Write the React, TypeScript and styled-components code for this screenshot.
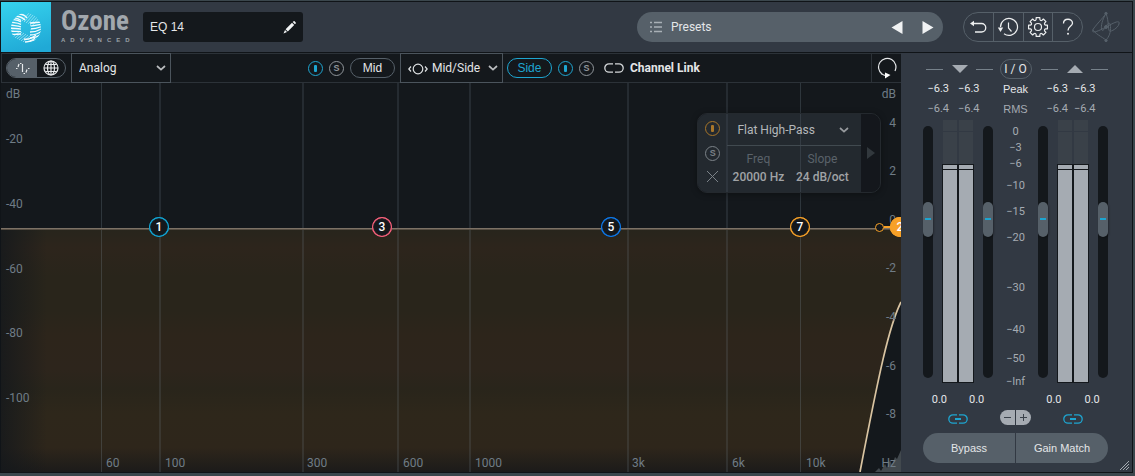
import React from "react";
import styled, { createGlobalStyle, css } from "styled-components";

const c = {
  frame: "#3b474d",
  panel: "#323943",
  dark: "#14181c",
  line: "#2c3238",
  lineLight: "#4b545c",
  pill: "#566069",
  text: "#e4e6e8",
  muted: "#a5abb2",
  axis: "#6f7c86",
  cyan: "#1ea5d0",
  orange: "#f7a128",
};

const roboto = `Roboto, "Liberation Sans", sans-serif`;
const arial = `"Liberation Sans", Roboto, sans-serif`;

const GlobalStyle = createGlobalStyle`
  *, *::before, *::after { box-sizing: border-box; }
  body { margin: 0; background: ${c.frame}; }
  button, select, input { font: inherit; color: inherit; margin: 0; padding: 0; border: 0; background: none; }
  button { cursor: pointer; display: inline-flex; align-items: center; justify-content: center; }
  svg { display: block; }
`;

const Window = styled.div`
  display: flex;
  flex-direction: column;
  min-height: 100vh;
  border: solid ${c.frame};
  border-width: 1px 2px 3px 0;
  background: #101418;
  padding: 1px 1px 1px 1px;
  color: ${c.text};
  font: 12px/16px ${roboto};
`;

/* ---------- header ---------- */

const Header = styled.header`
  display: flex;
  align-items: center;
  height: 50px;
  padding-right: 11px;
  background: ${c.panel};
`;

const Logo = styled.div`
  width: 50px;
  height: 50px;
  background: linear-gradient(165deg, #36d3ee, #20a9d6 90%);
`;

const Brand = styled.div`
  display: flex;
  flex-direction: column;
  width: 82px;
  margin-left: 10px;
  padding-bottom: 4px;
`;

const BrandName = styled.h1`
  margin: 0;
  font: bold 27px/29px "Liberation Sans Narrow", "Roboto Condensed", ${roboto};
  color: #a2a8ae;
`;

const BrandTier = styled.span`
  font: bold 6px/8px ${arial};
  letter-spacing: 5px;
  color: #9aa1a7;
`;

const NameField = styled.label`
  display: flex;
  align-items: center;
  width: 160px;
  height: 30px;
  padding: 0 7px;
  border-radius: 3px;
  background: ${c.dark};
  font: 12px/16px ${arial};
  input { flex: 1; min-width: 0; outline: 0; }
`;

const Spacer = styled.div<{ $grow?: number }>`
  flex: ${(p) => p.$grow ?? 1};
`;

const PresetBar = styled.div`
  display: flex;
  align-items: center;
  width: 306px;
  height: 30px;
  padding-left: 12px;
  border-radius: 15px;
  background: ${c.pill};
`;

const PresetButton = styled.button`
  flex: 1;
  justify-content: flex-start;
  gap: 8px;
  height: 30px;
`;

const ArrowButton = styled.button`
  width: 31px;
  height: 30px;
  svg { fill: #f0f2f3; }
`;

const Tools = styled.div`
  display: flex;
  width: 120px;
  height: 30px;
  margin: 0 8px 0 20px;
  border: 1px solid ${c.pill};
  border-radius: 15px;
`;

const ToolButton = styled.button`
  flex: 1;
  & + & { border-left: 1px solid ${c.pill}; }
  svg { fill: none; stroke: #eceeef; }
`;

/* ---------- layout ---------- */

const Body = styled.main`
  display: flex;
  flex: 1;
  margin-top: 1px;
`;

const Editor = styled.section`
  display: flex;
  flex: 1;
  flex-direction: column;
  min-width: 0;
  background: ${c.dark};
`;

/* ---------- toolbar ---------- */

const Toolbar = styled.div`
  display: flex;
  align-items: stretch;
  height: 30px;
  border: solid ${c.line};
  border-width: 1px 0 1px 1px;
`;

const Cluster = styled.div`
  display: flex;
  align-items: center;
  gap: 6px;
  padding: 0 5px 0 4px;
`;

const ViewToggle = styled.div`
  display: flex;
  width: 60px;
  height: 20px;
  border: 1px solid ${c.pill};
  border-radius: 10px;
  overflow: hidden;
`;

const ViewButton = styled.button<{ $on?: boolean }>`
  width: ${(p) => (p.$on ? 30 : 28)}px;
  background: ${(p) => (p.$on ? c.pill : "transparent")};
  svg { fill: none; stroke: #e8eaec; }
`;

const Dropdown = styled.div<{ $width: number; $boxed?: boolean }>`
  position: relative;
  display: flex;
  align-items: center;
  gap: 4px;
  width: ${(p) => p.$width}px;
  padding: 0 4px 0 7px;
  ${(p) => p.$boxed && css`
    margin: -1px 0;
    border: 1px solid ${c.lineLight};
  `}
  select {
    flex: 1;
    min-width: 0;
    height: 28px;
    appearance: none;
    outline: 0;
  }
  svg { fill: none; pointer-events: none; }
`;

const Pill = styled.button<{ $active?: boolean }>`
  width: 45px;
  height: 20px;
  border: 1px solid ${(p) => (p.$active ? c.cyan : c.pill)};
  border-radius: 10px;
  color: ${(p) => (p.$active ? c.cyan : c.text)};
  font-family: ${arial};
`;

const RoundButton = styled.button<{ $color: string }>`
  width: 15px;
  height: 15px;
  border: 1px solid ${(p) => p.$color};
  border-radius: 50%;
  color: ${(p) => p.$color};
  font: bold 9px/13px ${arial};
`;

const PowerBar = styled.i`
  width: 3px;
  height: 7px;
  border-radius: 1px;
  background: currentColor;
`;

const LinkToggle = styled.button`
  gap: 6px;
  margin-left: 4px;
  font: bold 12px/16px ${roboto};
`;

const LoopButton = styled.button`
  width: 30px;
  border-left: 1px solid ${c.line};
`;

/* ---------- spectrum ---------- */

const Plot = styled.div`
  position: relative;
  flex: 1;
  min-height: 388px;
  overflow: hidden;
`;

const PlotDrawing = styled.svg`
  position: absolute;
  inset: 0;
  width: 100%;
  height: 100%;
`;

const AxisLabel = styled.span<{ $x?: number; $y?: number; $side?: "left" | "right" }>`
  position: absolute;
  color: ${c.axis};
  ${(p) => (p.$y !== undefined ? `top: ${(p.$y / 389) * 100}%; margin-top: -8px;` : "bottom: 1px;")}
  ${(p) =>
    p.$side === "left" ? "left: 5px;" : p.$side === "right" ? "right: 5px;" : `left: ${((p.$x ?? 0) / 900) * 100}%;`}
`;

const Node = styled.button<{ $x: number; $color: string; $filled?: boolean }>`
  position: absolute;
  left: ${(p) => (p.$x / 900) * 100}%;
  top: 37%;
  width: 20px;
  height: 20px;
  margin: -10px 0 0 -10px;
  border-radius: 50%;
  border: 0;
  box-shadow: inset 0 0 0 1px ${(p) => p.$color}, inset 0 0 1px 1px ${(p) => p.$color};
  background: ${(p) => (p.$filled ? p.$color : c.dark)};
  color: #fff;
  font: 500 12px/20px ${roboto};
`;

const SlopeHandle = styled.div`
  position: absolute;
  right: 10px;
  top: 37%;
  display: flex;
  align-items: center;
  width: 16px;
  height: 9px;
  margin-top: -4px;
  &::before {
    content: "";
    width: 9px;
    height: 9px;
    border: 1px solid ${c.orange};
    border-radius: 50%;
    background: ${c.dark};
  }
  &::after { content: ""; flex: 1; height: 2px; background: ${c.orange}; }
`;

const BandPanel = styled.div`
  position: absolute;
  top: 30px;
  right: 20px;
  display: flex;
  width: 184px;
  height: 80px;
  border: 1px solid #24292e;
  border-radius: 10px;
  overflow: hidden;
  box-shadow: 0 1px 6px rgba(0, 0, 0, 0.35);
  color: #b4b7ba;
`;

const BandSwitches = styled.div`
  display: flex;
  flex-direction: column;
  align-items: center;
  justify-content: space-between;
  width: 30px;
  padding: 7px 0 10px;
  background: rgba(64, 72, 82, 0.36);
`;

const BandBody = styled.div`
  display: flex;
  flex: 1;
  flex-direction: column;
  background: rgba(64, 72, 82, 0.36);
`;

const BandType = styled.div`
  display: flex;
  height: 32px;
  padding: 0 8px 0 3px;
  border-bottom: 1px solid #414a50;
`;

const Params = styled.dl`
  display: grid;
  grid-template-columns: 62px 66px;
  margin: 4px 0 0;
  text-align: center;
  line-height: 18px;
  white-space: nowrap;
  dt { color: #5a626a; }
  dd { margin: 0; color: #a0a3a6; font-weight: 500; }
`;

const ExpandButton = styled.button`
  width: 19px;
  background: rgba(20, 24, 28, 0.6);
  svg { fill: #32383d; }
`;

/* ---------- meters ---------- */

const Meters = styled.aside`
  display: grid;
  grid-template-columns: 70px 45px 70px;
  grid-template-rows: 20px 20px 20px minmax(269px, 1fr) 20px 17px;
  align-content: start;
  width: 231px;
  padding: 6px 24px 9px 22px;
  background: ${c.panel};
  justify-items: center;
`;

const GroupHead = styled.div`
  display: flex;
  align-items: center;
  justify-content: space-between;
  justify-self: end;
  width: 67px;
  color: ${c.pill};
  &::before, &::after { content: ""; width: 17px; height: 1px; background: #76818a; }
  svg { fill: ${c.muted}; }
`;

const IoButton = styled.button`
  width: 32px;
  height: 20px;
  border: 1px solid ${c.pill};
  border-radius: 10px;
`;

const Readings = styled.div<{ $gap: number; $dim?: boolean; $shift?: number }>`
  display: flex;
  align-items: center;
  justify-content: center;
  gap: ${(p) => p.$gap}px;
  margin-right: ${(p) => p.$shift ?? 0}px;
  color: ${(p) => (p.$dim ? c.muted : c.text)};
  font-size: 11px;
  line-height: 16px;
`;

const RowLabel = styled.span<{ $dim?: boolean }>`
  align-self: center;
  font: 11px/16px ${arial};
  color: ${(p) => (p.$dim ? c.muted : c.text)};
`;

const Channel = styled.div`
  display: flex;
  justify-content: space-between;
  justify-self: stretch;
  padding: 1px 0 7px;
`;

const Fader = styled.input`
  width: 10px;
  margin: 6px 0 5px;
  appearance: none;
  writing-mode: vertical-lr;
  direction: rtl;
  border-radius: 5px;
  background: ${c.dark};
  &::-webkit-slider-thumb {
    appearance: none;
    width: 10px;
    height: 35px;
    border-radius: 5px;
    background: linear-gradient(${c.cyan}, ${c.cyan}) center / 6px 2px no-repeat, ${c.pill};
    box-shadow: 1px 1px 2px rgba(0, 0, 0, 0.3);
  }
`;

const LevelPair = styled.div`
  display: flex;
  width: 32px;
`;

const Level = styled.div`
  display: flex;
  flex: 1;
  flex-direction: column;
`;

const Headroom = styled.div<{ $share: number; $ceiling?: boolean }>`
  flex: ${(p) => p.$share} 0 0;
  margin: 0 1px;
  background: #3a4149;
  border-bottom: ${(p) => (p.$ceiling ? `1px solid ${c.panel}` : "0")};
`;

const Fill = styled.div<{ $share: number }>`
  flex: ${(p) => p.$share} 0 0;
  border: 1px solid ${c.dark};
  background: linear-gradient(${c.muted} 4px, ${c.dark} 4px, ${c.dark} 5px, ${c.muted} 5px);
`;

const Scale = styled.div`
  display: grid;
  grid-template-rows: 16fr 16fr 22fr 26fr 26fr 50fr 42fr 29fr 23fr 12px;
  padding: 7px 0 2px;
  text-align: center;
  font: 11px/12px ${roboto};
  color: ${c.muted};
`;

const MeterLink = styled.button`
  width: 22px;
  height: 17px;
`;

const ScaleZoom = styled.div`
  display: flex;
  gap: 1px;
  height: 15px;
  border-radius: 8px;
  overflow: hidden;
  button { width: 15px; background: ${c.muted}; }
  svg { fill: none; stroke: #3a424b; }
`;

const Footer = styled.div`
  display: flex;
  grid-column: 1 / -1;
  justify-self: stretch;
  gap: 1px;
  height: 30px;
  margin-top: 6px;
  border-radius: 15px;
  overflow: hidden;
  font: 11px/16px ${arial};
  button { flex: 1; background: ${c.pill}; }
`;

const Corner = styled.svg`
  position: absolute;
  right: 6px;
  bottom: 6px;
`;

/* ---------- small drawings ---------- */

const Chevron = () => (
  <svg width="10" height="6" viewBox="0 0 10 6" stroke="currentColor" strokeWidth="1.7">
    <path d="M1 1l4 3.6L9 1" opacity=".8" />
  </svg>
);

const Power = ({ color = c.cyan }: { color?: string }) => (
  <RoundButton $color={color} aria-label="Enable"><PowerBar /></RoundButton>
);

const Solo = ({ color = "#8f959a" }: { color?: string }) => (
  <RoundButton $color={color} aria-label="Solo">S</RoundButton>
);

const ChainIcon = ({ color, bar }: { color: string; bar?: boolean }) => (
  <svg width="20" height="10" viewBox="0 0 20 10" fill="none" stroke={color} strokeWidth="1.3">
    <path d="M9 .8H5A4.2 4.2 0 0 0 5 9.2h4M11 .8h4a4.2 4.2 0 0 1 0 8.4h-4" />
    {bar && <path d="M7 5h6" strokeWidth="2" />}
  </svg>
);

const LogoArt = () => (
  <svg width="50" height="50" viewBox="0 0 50 50">
    <defs>
      <mask id="ring">
        <circle cx="25" cy="26" r="15" fill="#fff" />
        <circle cx="25" cy="26" r="5" fill="#000" />
      </mask>
    </defs>
    <g mask="url(#ring)" fill="none" stroke="#f2fbfe" strokeWidth="1.3">
      {[16, 18, 21, 24, 27, 30, 33].map((y) => (
        <path key={y} d={`M9 ${y - 1}c4 1 7 0 11 ${(33 - y) / 5}`} />
      ))}
      {[19, 22, 25, 28, 31, 34, 37].map((y) => (
        <path key={y} d={`M29 ${y + 2}c4 0 8-1 12 ${-(y - 15) / 4}`} />
      ))}
      <path d="M13 14c5 0 8 1 11 4M17 12c4 0 7 1 9 4M23 37c4 1 7 0 12-4M24 40c4 0 7-1 10-4" />
      {[0, 2, 4, 6, 8, 10].map((d) => (
        <path key={d} d={`M${21 + d} ${19 + d / 2}l8-9M${12 + d} ${35 + d / 2}l7-6`} strokeWidth=".7" opacity=".7" />
      ))}
    </g>
  </svg>
);

const gear = Array.from({ length: 8 }, (_, i) => {
  const pt = (deg: number, r: number) => {
    const a = ((i * 45 + deg) * Math.PI) / 180;
    return `${(11 + r * Math.cos(a)).toFixed(2)} ${(11 + r * Math.sin(a)).toFixed(2)}`;
  };
  return `${i ? "L" : "M"}${pt(-11, 9.6)}L${pt(11, 9.6)}L${pt(14, 7.8)}Q${pt(22.5, 6.4)} ${pt(31, 7.8)}`;
}).join("") + "Z";

/* ---------- data ---------- */

const gridLines = [
  { x: 100, w: 1 }, { x: 158, w: 2 }, { x: 301, w: 2 }, { x: 396, w: 2 },
  { x: 468, w: 2 }, { x: 626, w: 2 }, { x: 725, w: 2 }, { x: 799, w: 1 },
];
const freqLabels: [string, number][] = [
  ["60", 105], ["100", 164], ["300", 306], ["600", 402], ["1000", 474], ["3k", 631], ["6k", 731], ["10k", 805],
];
const leftLabels: [string, number][] = [["dB", 11], ["-20", 56], ["-40", 121], ["-60", 186], ["-80", 250], ["-100", 315]];
const rightLabels: [string, number][] = [
  ["dB", 11], ["4", 40], ["2", 88], ["0", 137], ["-2", 185], ["-4", 234], ["-6", 283], ["-8", 331],
];
const nodes = [
  { n: 1, x: 158, color: "#12a5d4" },
  { n: 3, x: 381, color: "#f4607a" },
  { n: 5, x: 610, color: "#0f78e8" },
  { n: 7, x: 799, color: c.orange },
];
const scale = ["0", "−3", "−6", "−10", "−15", "−20", "−30", "−40", "−50", "−Inf"];

const ChannelMeter = ({ name }: { name: string }) => (
  <Channel>
    <Fader type="range" min={0} max={1000} defaultValue={652} aria-label={`${name} left gain`} />
    <LevelPair>
      {[0, 1].map((i) => (
        <Level key={i}>
          <Headroom $share={11} $ceiling />
          <Headroom $share={32} />
          <Fill $share={219} />
        </Level>
      ))}
    </LevelPair>
    <Fader type="range" min={0} max={1000} defaultValue={652} aria-label={`${name} right gain`} />
  </Channel>
);

export default function App() {
  return (
    <>
      <GlobalStyle />
      <Window>
        <Header>
          <Logo><LogoArt /></Logo>
          <Brand>
            <BrandName>Ozone</BrandName>
            <BrandTier>ADVANCED</BrandTier>
          </Brand>
          <NameField>
            <input defaultValue="EQ 14" aria-label="Module name" />
            <svg width="13" height="13" viewBox="0 0 13 13" fill="#f2f4f5">
              <path d="M2.6 8.2L9 1.8l2.2 2.2-6.4 6.4zM9.7 1.1L10.6.3q.5-.4 1 0l1.100 1.100q.4.5 0 1l-.8.9zM2 9l2 2-3.500 1.500z" />
            </svg>
          </NameField>
          <Spacer />
          <PresetBar>
            <PresetButton>
              <svg width="14" height="12" viewBox="0 0 14 12" stroke="#a9b0b6" strokeWidth="1.5">
                <path d="M1 1.500h2M1 6h2M1 10.500h2M5 1.500h8M5 6h8M5 10.500h8" />
              </svg>
              Presets
            </PresetButton>
            <ArrowButton aria-label="Previous preset">
              <svg width="12" height="13" viewBox="0 0 12 13"><path d="M11.500 0v13L.5 6.500z" /></svg>
            </ArrowButton>
            <ArrowButton aria-label="Next preset">
              <svg width="12" height="13" viewBox="0 0 12 13"><path d="M.5 0v13l11-6.500z" /></svg>
            </ArrowButton>
          </PresetBar>
          <Tools>
            <ToolButton aria-label="Undo">
              <svg width="18" height="14" viewBox="0 0 18 14" strokeWidth="1.3">
                <path d="M3 3.500h9.500a4.200 4.200 0 0 1 0 8.500H6" />
                <path d="M1 3.500L5 .8v5.400z" fill="#eceeef" stroke="none" />
              </svg>
            </ToolButton>
            <ToolButton aria-label="History">
              <svg width="22" height="20" viewBox="0 0 22 20" strokeWidth="1.2">
                <path d="M3.500 10a8.500 8.500 0 1 1 3.500 6.800M11.500 5.500V11l3 3.500" />
                <path d="M.8 10.500h5.400L3.500 15z" fill="#eceeef" stroke="none" />
              </svg>
            </ToolButton>
            <ToolButton aria-label="Settings">
              <svg width="22" height="22" viewBox="0 0 22 22" strokeWidth="1.2">
                <path d={gear} strokeLinejoin="round" />
                <circle cx="11" cy="11" r="3.500" />
              </svg>
            </ToolButton>
            <ToolButton aria-label="Help">
              <svg width="12" height="18" viewBox="0 0 12 18" strokeWidth="1.3">
                <path d="M1.500 5.500C1.500-.2 10.500 0 10.500 5.200 10.200 8.300 6 8.500 6 12.500" />
                <circle cx="6" cy="15.800" r="1" fill="#eceeef" stroke="none" />
              </svg>
            </ToolButton>
          </Tools>
          <svg width="30" height="32" viewBox="0 0 30 32" fill="none" stroke="#56606a" strokeWidth="1">
            <path d="M15 2.500C12 7 4 15 2 18.500c-2 4 3 3 13-2.500s14-7 13-3-8 8-9.500 7S18 10 15 2.500" />
            <path d="M15 29C11 26 3 22 2 18.500M15 29c3-3 5-8 4.500-13.500S17 12 15 15.500 11 21 10.500 18 11 9 15 2.500" />
            <circle cx="15" cy="2.500" r="1.200" fill="#56606a" />
            <circle cx="15" cy="29.500" r="1.200" fill="#56606a" />
            <circle cx="15" cy="16" r="1.500" fill="#56606a" />
          </svg>
        </Header>

        <Body>
          <Editor>
            <Toolbar>
              <Cluster>
                <ViewToggle>
                  <ViewButton $on aria-label="Curve view">
                    <svg width="15" height="13" viewBox="0 0 15 13" strokeWidth="1.2">
                      <path d="M1 6.500h1.500M3 5l1-3M5 1.500h1.500M7.500 2v8M8.500 11.500H10M11 10.500l1-3M13 6.500h1.500" />
                    </svg>
                  </ViewButton>
                  <ViewButton aria-label="Stereo view">
                    <svg width="16" height="16" viewBox="0 0 16 16" strokeWidth="1.200">
                      <circle cx="8" cy="8" r="7" />
                      <ellipse cx="8" cy="8" rx="3.500" ry="7" />
                      <path d="M8 1v14M1 8h14M2.500 4.500h11M2.500 11.500h11" />
                    </svg>
                  </ViewButton>
                </ViewToggle>
              </Cluster>
              <Dropdown $width={100} $boxed>
                <select aria-label="EQ mode"><option>Analog</option></select>
                <Chevron />
              </Dropdown>
              <Spacer $grow={4} />
              <Cluster>
                <Power />
                <Solo />
                <Pill>Mid</Pill>
              </Cluster>
              <Dropdown $width={103} $boxed>
                <svg width="20" height="14" viewBox="0 0 20 14" stroke="#dfe2e4" strokeWidth="1.200">
                  <circle cx="10" cy="8" r="4.800" />
                  <path d="M3 5.500L.8 8 3 10.500M17 5.500L19.200 8 17 10.500" />
                </svg>
                <select aria-label="Channel mode"><option>Mid/Side</option></select>
                <Chevron />
              </Dropdown>
              <Cluster>
                <Pill $active>Side</Pill>
                <Power />
                <Solo />
                <LinkToggle><ChainIcon color="#d5d8da" />Channel Link</LinkToggle>
              </Cluster>
              <Spacer $grow={5} />
              <LoopButton aria-label="Reset">
                <svg width="20" height="22" viewBox="0 0 20 22" fill="none" stroke="#e6e8ea" strokeWidth="1.200">
                  <path d="M5 17A8.700 8.700 0 1 1 18 14" />
                  <path d="M4 16.500q3 2 5 2.200" />
                  <path d="M8 15.500l5.500 2.500L8 21.500z" fill="#fff" stroke="none" />
                </svg>
              </LoopButton>
            </Toolbar>

            <Plot>
              <PlotDrawing viewBox="0 0 900 389" preserveAspectRatio="none">
                <defs>
                  <linearGradient id="earth" x1="0" y1="0" x2="0" y2="1">
                    <stop offset="0" stopColor="#27251c" />
                    <stop offset=".08" stopColor="#2d251c" />
                    <stop offset=".2" stopColor="#29251b" />
                    <stop offset=".34" stopColor="#29251b" />
                    <stop offset=".44" stopColor="#2d251b" />
                    <stop offset=".58" stopColor="#2d251c" />
                    <stop offset=".66" stopColor="#29251b" />
                    <stop offset=".76" stopColor="#2e271b" />
                    <stop offset=".9" stopColor="#2e261b" />
                    <stop offset="1" stopColor="#1c1b1a" />
                  </linearGradient>
                  <linearGradient id="edge">
                    <stop offset="0" stopColor={c.dark} stopOpacity=".8" />
                    <stop offset="1" stopColor={c.dark} stopOpacity="0" />
                  </linearGradient>
                </defs>
                <path d="M0 145H900V219C888 243 878 290 859 389H0z" fill="url(#earth)" />
                <rect x="0" y="145" width="46" height="244" fill="url(#edge)" />
                {gridLines.map((g) => (
                  <rect key={g.x} x={g.x} y="0" width={g.w} height="389" fill="#8fa3b0" opacity={g.w === 1 ? 0.22 : 0.14} />
                ))}
                <rect x="0" y="145" width="900" height="2" fill="#574e43" />
                <rect x="0" y="145" width="900" height="1" fill="#7d7266" />
                <path d="M874 389l4-4 2 3 4-7 2 4 3-8 2 5 3-8 2 2 4-9v22z" fill="#42494e" />
                <path d="M900 219C888 243 878 290 859 389" fill="none" stroke="#d9c4a2" strokeWidth="1.700" />
              </PlotDrawing>

              {leftLabels.map(([t, y]) => <AxisLabel key={t} $side="left" $y={y}>{t}</AxisLabel>)}
              {rightLabels.map(([t, y]) => <AxisLabel key={t} $side="right" $y={y}>{t}</AxisLabel>)}
              {freqLabels.map(([t, x]) => <AxisLabel key={t} $x={x}>{t}</AxisLabel>)}
              <AxisLabel $side="right">Hz</AxisLabel>

              {nodes.map((b) => <Node key={b.n} $x={b.x} $color={b.color}>{b.n}</Node>)}
              <SlopeHandle />
              <Node $x={899} $color={c.orange} $filled>2</Node>

              <BandPanel>
                <BandSwitches>
                  <Power color="#a8762a" />
                  <Solo color="#7b8288" />
                  <RemoveBand />
                </BandSwitches>
                <BandBody>
                  <BandType>
                    <Dropdown $width={123}>
                      <select aria-label="Filter type"><option>Flat High-Pass</option></select>
                      <Chevron />
                    </Dropdown>
                  </BandType>
                  <Params>
                    <dt>Freq</dt>
                    <dt>Slope</dt>
                    <dd>20000 Hz</dd>
                    <dd>24 dB/oct</dd>
                  </Params>
                </BandBody>
                <ExpandButton aria-label="Expand">
                  <svg width="8" height="12" viewBox="0 0 8 12"><path d="M0 0v12l8-6z" /></svg>
                </ExpandButton>
              </BandPanel>
            </Plot>
          </Editor>

          <Meters>
            <GroupHead><svg width="16" height="8" viewBox="0 0 16 8"><path d="M0 0h16L8 8z" /></svg></GroupHead>
            <IoButton>I / O</IoButton>
            <GroupHead><svg width="16" height="8" viewBox="0 0 16 8"><path d="M0 8h16L8 0z" /></svg></GroupHead>

            <Readings $gap={9} $shift={9}><span>−6.3</span><span>−6.3</span></Readings>
            <RowLabel>Peak</RowLabel>
            <Readings $gap={6} $shift={4}><span>−6.3</span><span>−6.3</span></Readings>

            <Readings $gap={9} $shift={9} $dim><span>−6.4</span><span>−6.4</span></Readings>
            <RowLabel $dim>RMS</RowLabel>
            <Readings $gap={6} $shift={4} $dim><span>−6.4</span><span>−6.4</span></Readings>

            <ChannelMeter name="Input" />
            <Scale>{scale.map((s) => <span key={s}>{s}</span>)}</Scale>
            <ChannelMeter name="Output" />

            <Readings $gap={22}><span>0.0</span><span>0.0</span></Readings>
            <span />
            <Readings $gap={23}><span>0.0</span><span>0.0</span></Readings>

            <MeterLink aria-label="Link input gains"><ChainIcon color={c.cyan} bar /></MeterLink>
            <ScaleZoom>
              <button aria-label="Zoom out"><svg width="9" height="9" viewBox="0 0 9 9"><path d="M1 4.500h7" /></svg></button>
              <button aria-label="Zoom in"><svg width="9" height="9" viewBox="0 0 9 9"><path d="M1 4.500h7M4.500 1v7" /></svg></button>
            </ScaleZoom>
            <MeterLink aria-label="Link output gains"><ChainIcon color={c.cyan} bar /></MeterLink>

            <Footer>
              <button>Bypass</button>
              <button>Gain Match</button>
            </Footer>
          </Meters>
        </Body>
        <Corner width="9" height="9" viewBox="0 0 9 9" stroke="#a5abb2" strokeWidth="1">
          <path d="M0 9L9 0M3 9l6-6M6 9l3-3" />
        </Corner>
      </Window>
    </>
  );
}

function RemoveBand() {
  return (
    <button aria-label="Remove band">
      <svg width="11" height="11" viewBox="0 0 11 11" stroke="#7b8288" fill="none">
        <path d="M0 0l11 11M11 0L0 11" />
      </svg>
    </button>
  );
}
